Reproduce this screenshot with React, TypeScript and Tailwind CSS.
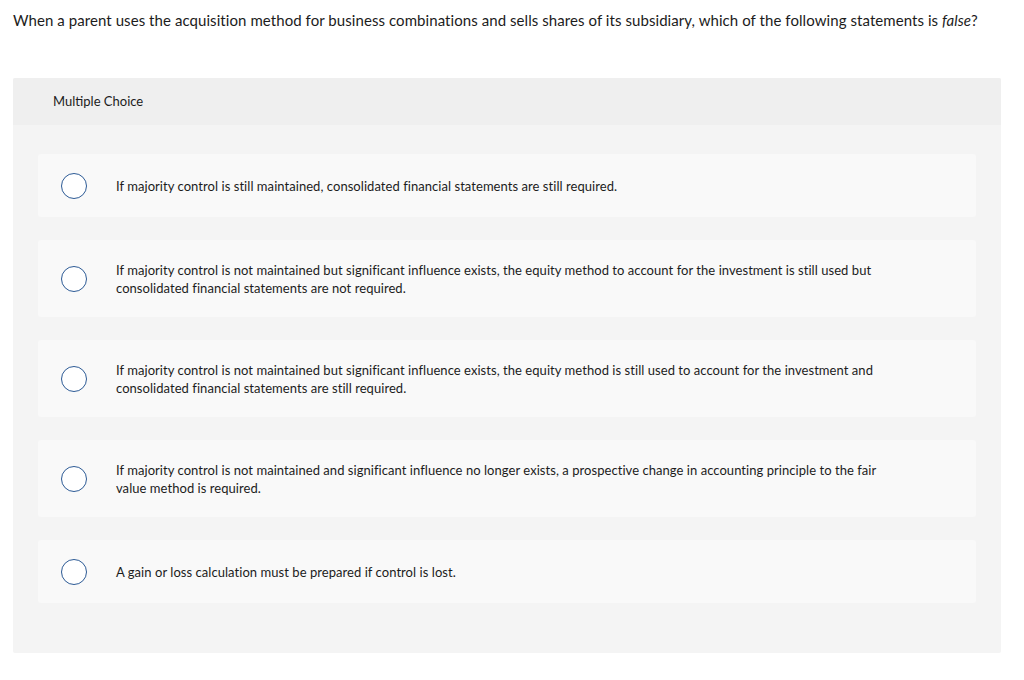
const options = [
  'If majority control is still maintained, consolidated financial statements are still required.',
  'If majority control is not maintained but significant influence exists, the equity method to account for the investment is still used but consolidated financial statements are not required.',
  'If majority control is not maintained but significant influence exists, the equity method is still used to account for the investment and consolidated financial statements are still required.',
  'If majority control is not maintained and significant influence no longer exists, a prospective change in accounting principle to the fair value method is required.',
  'A gain or loss calculation must be prepared if control is lost.',
];

export default function App() {
  return (
    <div className="min-h-[680px] bg-white font-['Lato','Liberation_Sans',sans-serif] text-[#1c1c1c]">
      <p className="px-[13px] pt-[10px] text-[15px] leading-[20px] tracking-[0.07px]">
        When a parent uses the acquisition method for business combinations and sells shares of its subsidiary, which of the following statements is <i>false</i>?
      </p>

      {/* Question panel */}
      <div className="mx-[13px] mt-[48px] w-[988px] overflow-hidden rounded-[2px] bg-[#f4f4f4]">
        <div className="flex h-[47px] items-center bg-[#efefef] px-[40px] text-[13px]">Multiple Choice</div>
        <div className="flex flex-col gap-[23px] px-[25px] pb-[50px] pt-[29px]">
          {options.map((text, i) => (
            <div key={i} className="flex items-center rounded-[3px] bg-[#f9f9f9] py-[18.5px] pl-[23px] pr-[80px]">
              <span className="h-[26px] w-[26px] shrink-0 rounded-full border border-[#2c5a95] bg-white" />
              <span className="ml-[29px] max-w-[775px] py-[2px] text-[13px] leading-[18px] tracking-[0.05px]">{text}</span>
            </div>
          ))}
        </div>
      </div>
    </div>
  );
}
